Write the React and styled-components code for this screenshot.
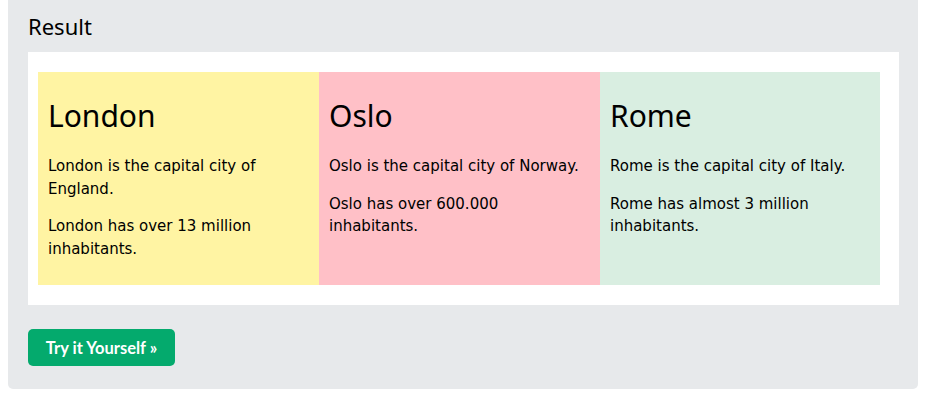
import React from 'react';
import styled, { createGlobalStyle } from 'styled-components';

const GlobalStyle = createGlobalStyle`
  html, body {
    margin: 0;
    padding: 0;
    background: #ffffff;
  }
  body {
    padding-left: 8px;
  }
`;

const cities = [
  {
    name: 'London',
    color: '#fff4a3',
    lines: ['London is the capital city of England.', 'London has over 13 million inhabitants.'],
  },
  {
    name: 'Oslo',
    color: '#ffc0c7',
    lines: ['Oslo is the capital city of Norway.', 'Oslo has over 600.000 inhabitants.'],
  },
  {
    name: 'Rome',
    color: '#d9eee1',
    lines: ['Rome is the capital city of Italy.', 'Rome has almost 3 million inhabitants.'],
  },
];

const App = () => {
  return (
    <>
      <GlobalStyle />
      <Panel>
        <Title>Result</Title>
        <ResultBox>
          <Row>
            {cities.map((c) => (
              <City key={c.name} bg={c.color}>
                <CityName>{c.name}</CityName>
                {c.lines.map((l) => (
                  <Text key={l}>{l}</Text>
                ))}
              </City>
            ))}
          </Row>
        </ResultBox>
        <TryButton>Try it Yourself »</TryButton>
      </Panel>
    </>
  );
};

export default App;

const Panel = styled.div`
  width: 910px;
  box-sizing: border-box;
  background: #e7e9eb;
  border-radius: 0 0 5px 5px;
  padding: 0 19px 23px 20px;
  display: flex;
  flex-direction: column;
  align-items: flex-start;
`;

const Title = styled.h3`
  margin: 0;
  height: 52px;
  line-height: 52px;
  font-family: 'Noto Sans', 'Open Sans', sans-serif;
  font-weight: 400;
  font-size: 22px;
  color: #000;
`;

const ResultBox = styled.div`
  align-self: stretch;
  background: #ffffff;
  padding: 20px 19px 20px 10px;
`;

const Row = styled.div`
  display: grid;
  grid-template-columns: 281px 281px 1fr;
`;

const City = styled.div`
  background: ${(p) => p.bg};
  padding: 10px;
`;

const CityName = styled.h2`
  margin: 10px 0;
  font-family: 'Noto Sans', 'Open Sans', sans-serif;
  font-weight: 400;
  font-size: 30px;
  line-height: 48px;
  color: #000;
`;

const Text = styled.p`
  margin: 15px 0;
  font-family: 'DejaVu Sans', Verdana, sans-serif;
  font-size: 15px;
  line-height: 22.5px;
  color: #000;
`;

const TryButton = styled.button`
  margin-top: 24px;
  width: 147px;
  height: 37px;
  border: none;
  border-radius: 5px;
  background: #04aa6d;
  color: #ffffff;
  font-family: 'Lato', 'Open Sans', sans-serif;
  font-weight: 700;
  font-size: 16.5px;
  cursor: pointer;
`;
